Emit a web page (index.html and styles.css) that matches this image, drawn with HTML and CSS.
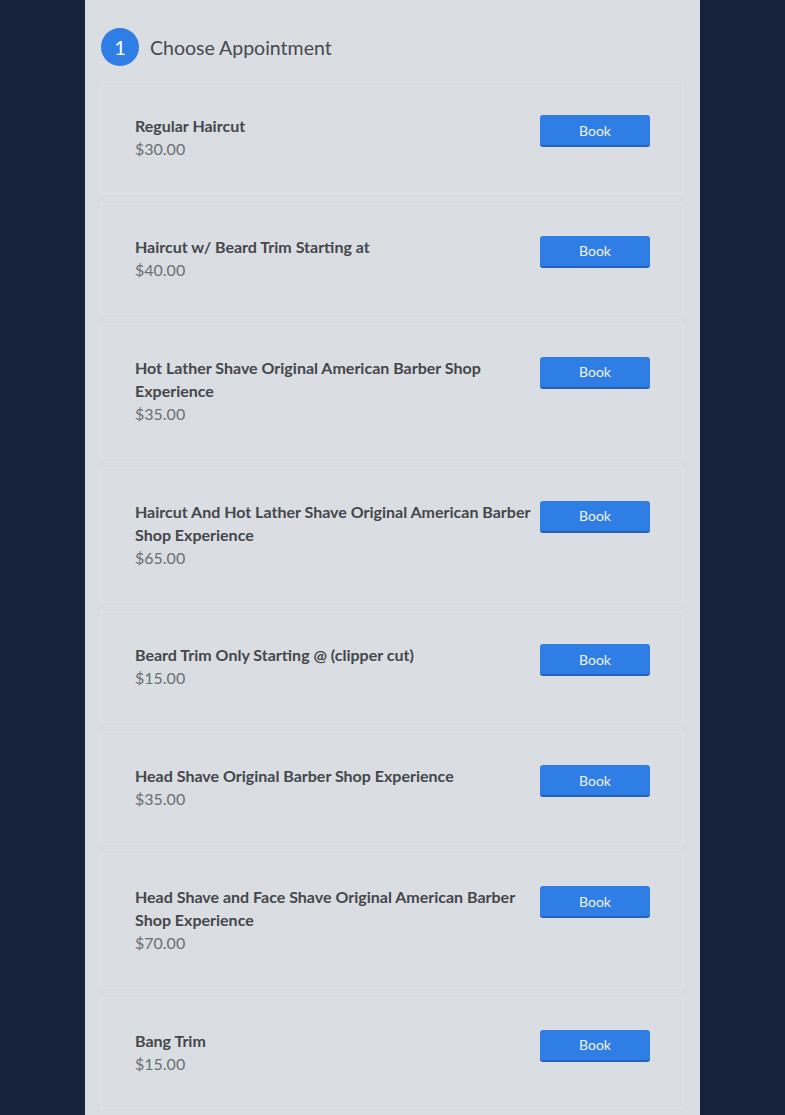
FILE: index.html
```html
<!DOCTYPE html>
<html>
<head>
<meta charset="utf-8">
<link rel="stylesheet" href="styles.css">
</head>
<body>
<div class="page">
  <main class="panel">
    <header class="step">
      <span class="step-num">1</span>
      <h2 class="step-title">Choose Appointment</h2>
    </header>
    <div class="list">
      <div class="card">
        <div class="info"><div class="name">Regular Haircut</div><div class="price">$30.00</div></div>
        <button class="book">Book</button>
      </div>
      <div class="card">
        <div class="info"><div class="name">Haircut w/ Beard Trim Starting at</div><div class="price">$40.00</div></div>
        <button class="book">Book</button>
      </div>
      <div class="card">
        <div class="info"><div class="name">Hot Lather Shave Original American Barber Shop Experience</div><div class="price">$35.00</div></div>
        <button class="book">Book</button>
      </div>
      <div class="card">
        <div class="info"><div class="name">Haircut And Hot Lather Shave Original American Barber Shop Experience</div><div class="price">$65.00</div></div>
        <button class="book">Book</button>
      </div>
      <div class="card">
        <div class="info"><div class="name">Beard Trim Only Starting @ (clipper cut)</div><div class="price">$15.00</div></div>
        <button class="book">Book</button>
      </div>
      <div class="card">
        <div class="info"><div class="name">Head Shave Original Barber Shop Experience</div><div class="price">$35.00</div></div>
        <button class="book">Book</button>
      </div>
      <div class="card">
        <div class="info"><div class="name">Head Shave and Face Shave Original American Barber Shop Experience</div><div class="price">$70.00</div></div>
        <button class="book">Book</button>
      </div>
      <div class="card">
        <div class="info"><div class="name">Bang Trim</div><div class="price">$15.00</div></div>
        <button class="book">Book</button>
      </div>
    </div>
  </main>
</div>
</body>
</html>
```
FILE: styles.css
```css
html, body {
  margin: 0;
  padding: 0;
  background: #17223b;
  height: 100%;
  overflow: hidden;
}
body {
  font-family: "Source Sans Pro", Lato, "Liberation Sans", sans-serif;
}
.page {
  padding-left: 85px;
}
.panel {
  width: 583px;
  background: #dadde1;
  padding: 28px 16px 16px;
  min-height: 1200px;
}
.step {
  display: flex;
  align-items: center;
  gap: 11px;
  height: 38px;
  margin-bottom: 16px;
}
.step-num {
  width: 38px;
  height: 38px;
  border-radius: 50%;
  background: #2f7ee6;
  color: #fff;
  font-size: 20px;
  display: flex;
  align-items: center;
  justify-content: center;
}
.step-title {
  margin: 0;
  font-size: 19.5px;
  font-weight: 400;
  color: #454a50;
}
.list {
  display: flex;
  flex-direction: column;
  gap: 8.85px;
}
.card {
  display: flex;
  align-items: flex-start;
  justify-content: space-between;
  gap: 2px;
  border: 1px solid #e1e4e7;
  padding: 32px 33px;
}
.info {
  width: 403px;
  line-height: 23px;
  font-size: 16px;
  margin-top: -1px;
  margin-bottom: 1px;
}
.name {
  font-weight: 700;
  color: #44474c;
}
.price {
  color: #6b6f75;
}
.book {
  width: 110px;
  height: 32px;
  border: 0;
  border-bottom: 2px solid #2563b8;
  border-radius: 3px;
  background: #2f7ee6;
  color: #f2f6fc;
  font-family: inherit;
  font-size: 14px;
  padding: 0;
  flex-shrink: 0;
}
```
